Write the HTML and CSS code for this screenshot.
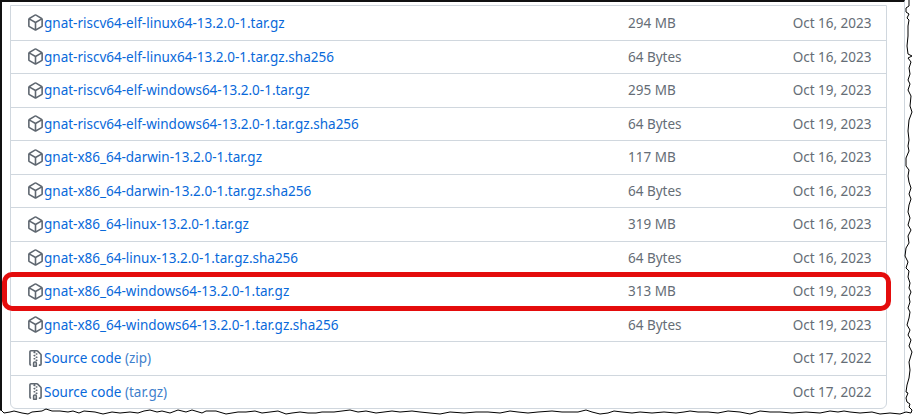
FILE: index.html
```html
<!DOCTYPE html>
<html lang="en">
<head>
<meta charset="utf-8">
<title>Release assets</title>
<link rel="stylesheet" href="styles.css">
</head>
<body>
<svg width="0" height="0" class="defs" aria-hidden="true">
  <symbol id="pkg" viewBox="0 0 16 16"><path d="m8.878.392 5.25 3.045c.54.314.872.89.872 1.514v6.098a1.75 1.75 0 0 1-.872 1.514l-5.25 3.045a1.75 1.75 0 0 1-1.756 0l-5.25-3.045A1.75 1.75 0 0 1 1 11.049V4.951c0-.624.332-1.201.872-1.514L7.122.392a1.75 1.75 0 0 1 1.756 0ZM7.875 1.69l-4.63 2.685L8 7.133l4.755-2.758-4.63-2.685a.248.248 0 0 0-.25 0ZM2.5 5.677v5.372c0 .09.047.171.125.216l4.625 2.683V8.432Zm6.25 8.271 4.625-2.683a.25.25 0 0 0 .125-.216V5.677L8.75 8.432Z"/></symbol>
  <symbol id="zip" viewBox="0 0 16 16"><path d="M3.5 1.75v11.5c0 .09.048.173.126.217a.75.75 0 0 1-.752 1.298A1.748 1.748 0 0 1 2 13.25V1.75C2 .784 2.784 0 3.75 0h5.586c.464 0 .909.185 1.237.513l2.914 2.914c.329.328.513.773.513 1.237v8.586A1.75 1.75 0 0 1 12.25 15h-.5a.75.75 0 0 1 0-1.5h.5a.25.25 0 0 0 .25-.25V4.664a.25.25 0 0 0-.073-.177L9.513 1.573a.25.25 0 0 0-.177-.073H7.25a.75.75 0 0 1 0 1.5h-.5a.75.75 0 0 1 0-1.5h-3a.25.25 0 0 0-.25.25Zm3.75 8.75h.5c.966 0 1.75.784 1.75 1.75v3a.75.75 0 0 1-.75.75h-2.5a.75.75 0 0 1-.75-.75v-3c0-.966.784-1.75 1.75-1.75ZM6 5.25a.75.75 0 0 1 .75-.75h.5a.75.75 0 0 1 0 1.5h-.5A.75.75 0 0 1 6 5.25Zm.75 2.25h.5a.75.75 0 0 1 0 1.5h-.5a.75.75 0 0 1 0-1.5ZM8 6.75A.75.75 0 0 1 8.75 6h.5a.75.75 0 0 1 0 1.5h-.5A.75.75 0 0 1 8 6.75ZM8.75 3h.5a.75.75 0 0 1 0 1.5h-.5a.75.75 0 0 1 0-1.5ZM8 9.75A.75.75 0 0 1 8.75 9h.5a.75.75 0 0 1 0 1.5h-.5A.75.75 0 0 1 8 9.75Zm-1 2.5v2.25h1v-2.25a.25.25 0 0 0-.25-.25h-.5a.25.25 0 0 0-.25.25Z"/></symbol>
</svg>
<main class="shot">
  <ul class="assets">
    <li class="row"><svg class="icon"><use href="#pkg"/></svg><a class="name" href="#">gnat-riscv64-elf-linux64-13.2.0-1.tar.gz</a><span class="size">294 MB</span><span class="date">Oct 16, 2023</span></li>
    <li class="row"><svg class="icon"><use href="#pkg"/></svg><a class="name" href="#">gnat-riscv64-elf-linux64-13.2.0-1.tar.gz.sha256</a><span class="size">64 Bytes</span><span class="date">Oct 16, 2023</span></li>
    <li class="row"><svg class="icon"><use href="#pkg"/></svg><a class="name" href="#">gnat-riscv64-elf-windows64-13.2.0-1.tar.gz</a><span class="size">295 MB</span><span class="date">Oct 19, 2023</span></li>
    <li class="row"><svg class="icon"><use href="#pkg"/></svg><a class="name" href="#">gnat-riscv64-elf-windows64-13.2.0-1.tar.gz.sha256</a><span class="size">64 Bytes</span><span class="date">Oct 19, 2023</span></li>
    <li class="row"><svg class="icon"><use href="#pkg"/></svg><a class="name" href="#">gnat-x86_64-darwin-13.2.0-1.tar.gz</a><span class="size">117 MB</span><span class="date">Oct 16, 2023</span></li>
    <li class="row"><svg class="icon"><use href="#pkg"/></svg><a class="name" href="#">gnat-x86_64-darwin-13.2.0-1.tar.gz.sha256</a><span class="size">64 Bytes</span><span class="date">Oct 16, 2023</span></li>
    <li class="row"><svg class="icon"><use href="#pkg"/></svg><a class="name" href="#">gnat-x86_64-linux-13.2.0-1.tar.gz</a><span class="size">319 MB</span><span class="date">Oct 16, 2023</span></li>
    <li class="row"><svg class="icon"><use href="#pkg"/></svg><a class="name" href="#">gnat-x86_64-linux-13.2.0-1.tar.gz.sha256</a><span class="size">64 Bytes</span><span class="date">Oct 16, 2023</span></li>
    <li class="row"><svg class="icon"><use href="#pkg"/></svg><a class="name" href="#">gnat-x86_64-windows64-13.2.0-1.tar.gz</a><span class="size">313 MB</span><span class="date">Oct 19, 2023</span></li>
    <li class="row"><svg class="icon"><use href="#pkg"/></svg><a class="name" href="#">gnat-x86_64-windows64-13.2.0-1.tar.gz.sha256</a><span class="size">64 Bytes</span><span class="date">Oct 19, 2023</span></li>
    <li class="row"><svg class="icon"><use href="#zip"/></svg><a class="name" href="#">Source code <span class="ext">(zip)</span></a><span class="size"></span><span class="date">Oct 17, 2022</span></li>
    <li class="row"><svg class="icon"><use href="#zip"/></svg><a class="name" href="#">Source code <span class="ext">(tar.gz)</span></a><span class="size"></span><span class="date">Oct 17, 2022</span></li>
  </ul>
  <div class="callout"></div>
  <svg class="torn" viewBox="0 0 915 419" width="915" height="419" aria-hidden="true">
    <path class="cut" d="M0 410H1L4 413L10 412L14 411L22 413L28 414L32 412L42 411L46 409L52 411L60 411L68 412L73 411L79 413L84 411L95 412L103 414L112 412L120 413L130 412L138 413L144 411L150 410L157 412L162 411L170 413L178 410L186 412L192 410L202 413L206 411L216 411L226 414L238 412L246 412L255 411L262 413L270 412L278 411L286 414L292 413L300 412L308 413L316 413L322 412L334 412L342 411L350 410L358 412L366 411L376 413L384 412L392 411L400 412L412 411L420 412L430 413L440 414L450 412L464 413L476 412L488 412L500 413L510 411L518 412L528 413L538 412L552 411L562 412L578 412L586 410L592 412L600 414L608 413L614 411L622 412L632 413L640 412L652 413L664 412L676 413L684 412L690 411L698 412L708 412L718 413L728 411L740 412L750 414L760 411L770 412L780 412L792 413L806 412L820 413L830 411L838 412L844 411L850 412L860 413L872 412L880 414L890 413L900 414L906 412L911 413L912 410L909 407L910 404L907 402L906 398L908 393L906 392L907 385L909 378L910 370L909 362L912 352L909 346L911 340L908 335L910 330L907 325L909 318L910 312L908 308L910 302L909 297L911 292L909 288L910 283L908 277L909 271L906 268L908 262L905 256L906 248L909 243L908 236L911 230L908 225L910 218L908 212L909 205L911 199L909 194L911 188L909 182L908 176L909 170L906 166L906 158L909 151L908 146L909 140L908 131L909 120L912 112L910 106L911 96L908 90L910 84L908 80L910 74L909 68L911 62L908 58L912 56L908 54L907 46L908 36L908 26L909 20L907 18L909 14L906 12L906 8L909 6V0H915V419H0Z"/>
    <path class="edge" d="M0 410H1L4 413L10 412L14 411L22 413L28 414L32 412L42 411L46 409L52 411L60 411L68 412L73 411L79 413L84 411L95 412L103 414L112 412L120 413L130 412L138 413L144 411L150 410L157 412L162 411L170 413L178 410L186 412L192 410L202 413L206 411L216 411L226 414L238 412L246 412L255 411L262 413L270 412L278 411L286 414L292 413L300 412L308 413L316 413L322 412L334 412L342 411L350 410L358 412L366 411L376 413L384 412L392 411L400 412L412 411L420 412L430 413L440 414L450 412L464 413L476 412L488 412L500 413L510 411L518 412L528 413L538 412L552 411L562 412L578 412L586 410L592 412L600 414L608 413L614 411L622 412L632 413L640 412L652 413L664 412L676 413L684 412L690 411L698 412L708 412L718 413L728 411L740 412L750 414L760 411L770 412L780 412L792 413L806 412L820 413L830 411L838 412L844 411L850 412L860 413L872 412L880 414L890 413L900 414L906 412L911 413L912 410L909 407L910 404L907 402L906 398L908 393L906 392L907 385L909 378L910 370L909 362L912 352L909 346L911 340L908 335L910 330L907 325L909 318L910 312L908 308L910 302L909 297L911 292L909 288L910 283L908 277L909 271L906 268L908 262L905 256L906 248L909 243L908 236L911 230L908 225L910 218L908 212L909 205L911 199L909 194L911 188L909 182L908 176L909 170L906 166L906 158L909 151L908 146L909 140L908 131L909 120L912 112L910 106L911 96L908 90L910 84L908 80L910 74L909 68L911 62L908 58L912 56L908 54L907 46L908 36L908 26L909 20L907 18L909 14L906 12L906 8L909 6V0"/>
  </svg>
</main>
</body>
</html>
```
FILE: styles.css
```css
* { box-sizing: border-box; }
html, body { margin: 0; padding: 0; background: #fff; }
body { width: 915px; height: 419px; overflow: hidden; font-family: "Noto Sans", "Open Sans", sans-serif; font-size: 13.5px; }
.defs { position: absolute; }
.shot {
  position: relative;
  width: 905px;
  height: 419px;
  padding: 3px 0 0 8px;
  border-top: 2px solid #111;
  border-left: 2px solid #111;
  border-right: 1px solid #d0d7de;
}
.assets {
  list-style: none;
  margin: 0;
  padding: 0;
  width: 877px;
  height: 404px;
  display: grid;
  grid-auto-rows: 1fr;
  border: 1px solid #d0d7de;
  border-radius: 0 0 6px 6px;
}
.row {
  display: flex;
  align-items: center;
  padding: 0 14.5px 0 16px;
  border-top: 1px solid #d0d7de;
}
.row:first-child { border-top: 0; }
.icon { width: 17px; height: 17px; flex: none; fill: #5f6770; }
.name { color: #0969da; text-decoration: none; flex: none; width: 584px; }
.ext { color: #3f7fcc; }
.size { color: #656d76; flex: 1; }
.date { color: #656d76; flex: none; }
.callout {
  position: absolute;
  left: 0;
  top: 270px;
  width: 889px;
  height: 39px;
  border: 5px solid #e40c0c;
  border-radius: 10px;
}
.torn { position: absolute; left: -2px; top: -2px; }
.cut { fill: #fff; }
.edge { fill: none; stroke: #000; stroke-width: 1; }
```
